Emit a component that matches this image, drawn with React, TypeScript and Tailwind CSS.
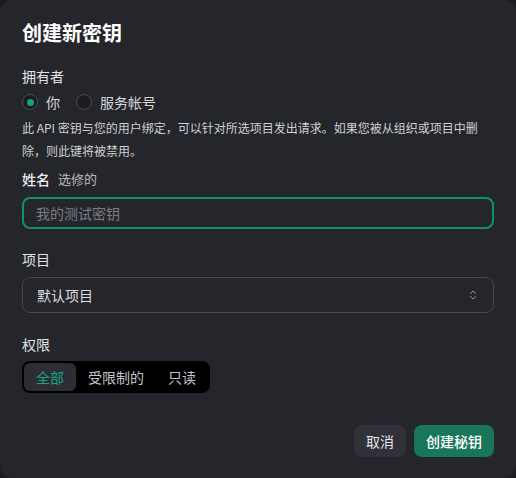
import { ChevronsUpDown } from 'lucide-react';

const font = { fontFamily: '"Noto Sans CJK SC", "Noto Sans", sans-serif' };

const Radio = ({ checked, label }: { checked?: boolean; label: string }) => (
  <label className="flex items-center gap-2 text-[14px] text-[#d8d8dc]">
    <span
      className={
        'flex h-4 w-4 items-center justify-center rounded-full border ' +
        (checked ? 'border-[#4b4c55] bg-[#1c1d21]' : 'border-[#4b4c55] bg-[#1c1d21]')
      }
    >
      {checked && <span className="h-[7px] w-[7px] rounded-full bg-[#10a37f]" />}
    </span>
    {label}
  </label>
);

export default function App() {
  return (
    <div className="h-[478px] w-[516px] bg-[#1b1c1f]" style={font}>
      <div className="flex h-full flex-col rounded-xl bg-[#25262b] px-[22px] pt-[19px]">
        <h1 className="text-[20px] font-semibold leading-[28px] text-white">创建新密钥</h1>

        <div className="mt-[19px] text-[14px] leading-[20px] text-[#e2e2e6]">拥有者</div>
        <div className="mt-[6px] flex h-5 items-center gap-4">
          <Radio checked label="你" />
          <Radio label="服务帐号" />
        </div>
        <p className="mt-[4px] text-[12px] leading-[23px] text-[#cfcfd4]">
          此 API 密钥与您的用户绑定，可以针对所选项目发出请求。如果您被从组织或项目中删除，则此键将被禁用。
        </p>

        <div className="mt-[7px] flex items-center gap-2 text-[14px] leading-[20px]">
          <span className="font-medium text-[#ececef]">姓名</span>
          <span className="text-[13px] text-[#b8b8be]">选修的</span>
        </div>
        <input
          className="mt-2 h-[32px] w-full rounded-lg border-2 border-[#12906d] bg-transparent px-3 text-[14px] text-white outline-none placeholder:text-[#7c7d85]"
          placeholder="我的测试密钥"
        />

        <div className="mt-5 text-[14px] leading-[20px] text-[#e2e2e6]">项目</div>
        <div className="mt-2 flex h-9 items-center justify-between rounded-lg border border-[#46474f] px-[14px] text-[14px] text-[#dcdce0]">
          <span>默认项目</span>
          <ChevronsUpDown size={12} strokeWidth={2} className="text-[#9a9aa2]" />
        </div>

        <div className="mt-[21px] text-[14px] leading-[20px] text-[#e2e2e6]">权限</div>
        <div className="mt-[7px] flex h-8 w-fit items-center rounded-lg bg-black p-[2px] text-[14px]">
          <span className="flex h-7 items-center rounded-md bg-[#2d2e35] px-3 text-[#18a57e]">全部</span>
          <span className="flex h-7 items-center px-3 text-[#c4c4ca]">受限制的</span>
          <span className="flex h-7 items-center px-3 text-[#c4c4ca]">只读</span>
        </div>

        <div className="mt-8 flex justify-end gap-2">
          <button className="h-8 rounded-lg bg-[#303139] px-3 text-[14px] text-[#e4e4e8]">取消</button>
          <button className="h-8 rounded-lg bg-[#197658] px-3 text-[14px] font-medium text-white">创建秘钥</button>
        </div>
      </div>
    </div>
  );
}
